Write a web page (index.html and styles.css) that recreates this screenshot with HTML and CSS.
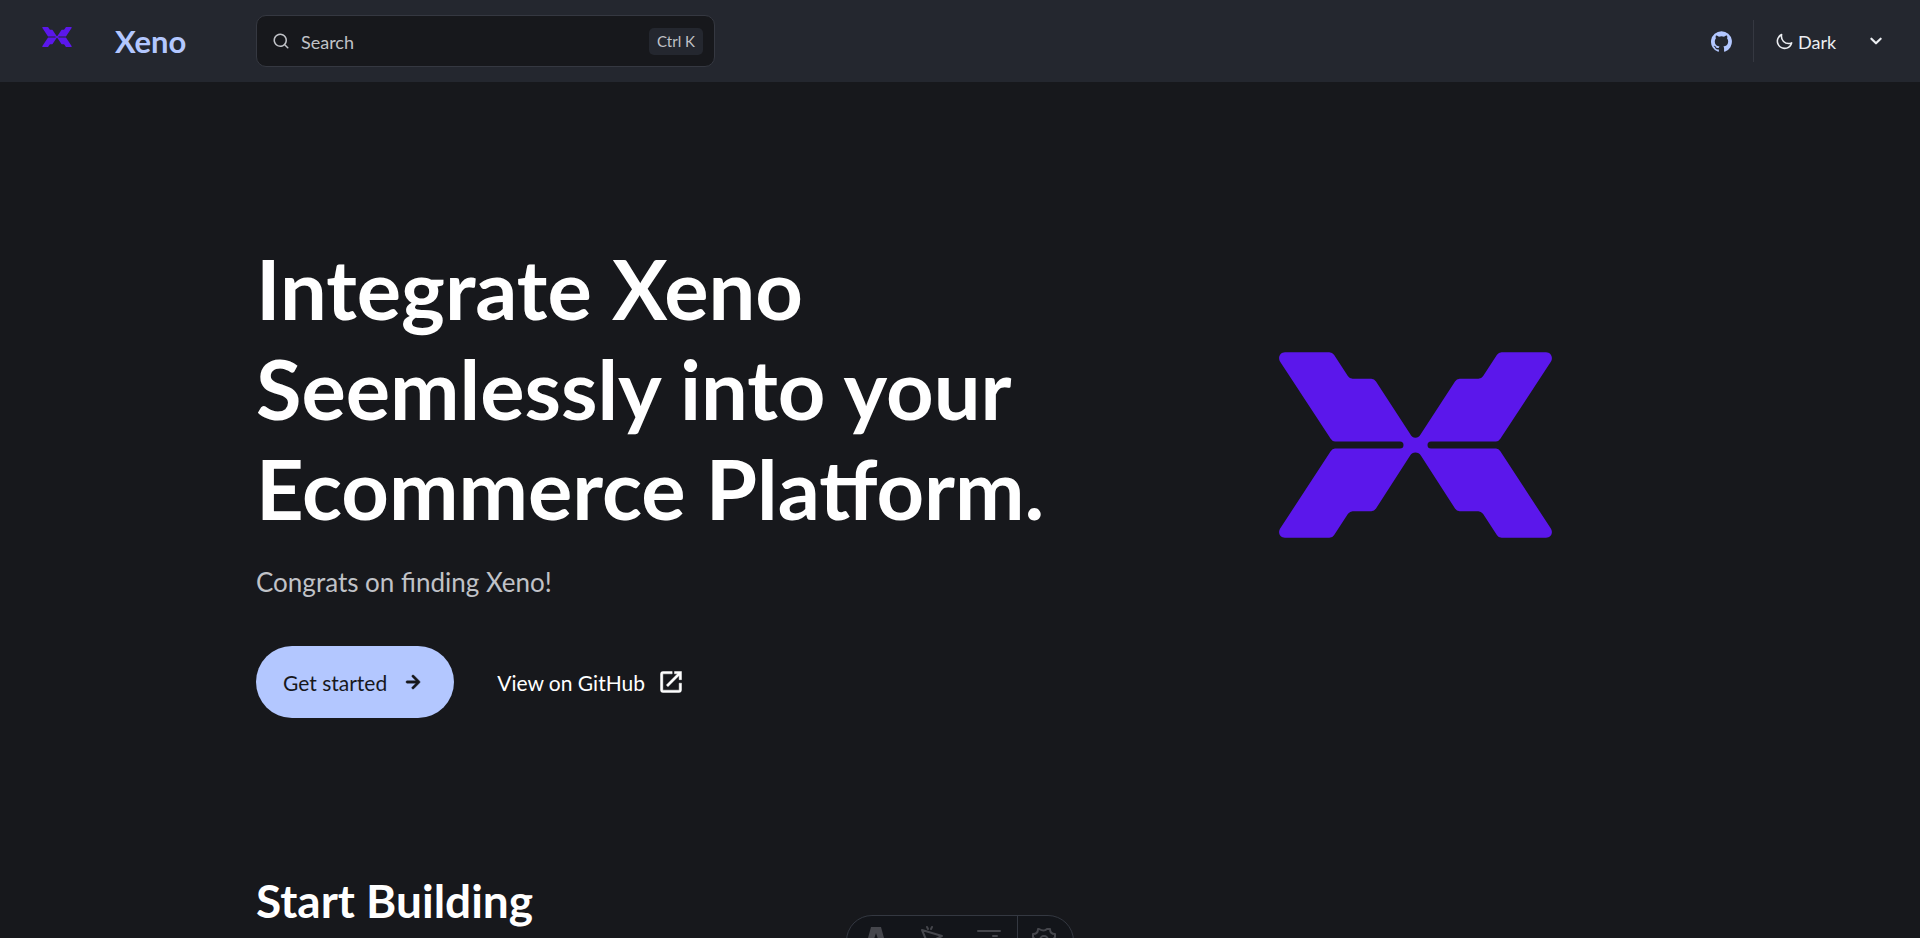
FILE: index.html
```html
<!DOCTYPE html>
<html lang="en">
  <head>
    <meta charset="UTF-8" />
    <meta name="viewport" content="width=device-width, initial-scale=1.0" />
    <title>Xeno</title>
    <link rel="stylesheet" href="styles.css">
  </head>
  <body>
    <!-- Shared logo shape -->
    <svg class="sprite" aria-hidden="true">
      <symbol id="xeno-logo" viewBox="57 67 819 557">
        <path d="M75 67H208Q217 67 222 75L264 139Q270 147 278 147H334Q343 147 348 155L450 312Q456 324 466 324Q477 324 483 312L585 155Q590 147 599 147H655Q663 147 669 139L711 75Q716 67 725 67H858C873 67 880 83 873 95L721 327Q716 335 708 335H513A10.5 10.5 0 0 0 513 356H708Q716 356 721 364L873 597C880 609 873 624 858 624H725Q716 624 711 616L669 552Q663 544 655 544H599Q590 544 585 536L483 378Q477 368 466 368Q456 368 450 378L348 536Q343 544 334 544H278Q270 544 264 552L222 616Q217 624 208 624H75C60 624 53 609 60 597L212 364Q217 356 225 356H420A10.5 10.5 0 0 0 420 335H225Q217 335 212 327L60 95C53 83 60 67 75 67Z" />
      </symbol>
    </svg>

    <header class="header">
      <a class="site-title" href="/">
        <svg class="site-logo"><use href="#xeno-logo" /></svg>
        <span>Xeno</span>
      </a>
      <button class="search" type="button">
        <svg class="search-icon" viewBox="0 0 24 24">
          <path d="M21.71 20.29 18 16.61A9 9 0 1 0 16.61 18l3.68 3.68a.999.999 0 0 0 1.42 0 1 1 0 0 0 0-1.39ZM11 18a7 7 0 1 1 0-14 7 7 0 0 1 0 14Z" />
        </svg>
        <span>Search</span>
        <kbd>Ctrl K</kbd>
      </button>
      <div class="header-right">
        <a class="social" href="#github" aria-label="GitHub">
          <svg viewBox="0 0 24 24">
            <path d="M12 .3a12 12 0 0 0-3.8 23.38c.6.12.83-.26.83-.57L9 21.07c-3.34.72-4.04-1.61-4.04-1.61-.55-1.39-1.34-1.76-1.34-1.76-1.08-.74.09-.73.09-.73 1.2.09 1.83 1.24 1.83 1.24 1.08 1.83 2.81 1.3 3.5 1 .1-.78.42-1.31.76-1.61-2.67-.3-5.47-1.33-5.47-5.93 0-1.31.47-2.38 1.24-3.22-.14-.3-.54-1.52.1-3.18 0 0 1-.32 3.3 1.23a11.5 11.5 0 0 1 6 0c2.28-1.55 3.29-1.23 3.29-1.23.64 1.66.24 2.88.12 3.18a4.65 4.65 0 0 1 1.23 3.22c0 4.61-2.8 5.63-5.48 5.92.42.36.81 1.1.81 2.22l-.01 3.29c0 .31.2.69.82.57A12 12 0 0 0 12 .3Z" />
          </svg>
        </a>
        <div class="theme">
          <svg class="theme-icon" viewBox="0 0 24 24">
            <path d="M21.64 13a1 1 0 0 0-1.05-.14 8.049 8.049 0 0 1-3.37.73 8.15 8.15 0 0 1-8.14-8.1 8.59 8.59 0 0 1 .25-2A1 1 0 0 0 8 2.36a10.14 10.14 0 1 0 14 11.69 1 1 0 0 0-.36-1.05Zm-9.5 6.69A8.14 8.14 0 0 1 7.08 5.22v.27a10.15 10.15 0 0 0 10.14 10.14 9.784 9.784 0 0 0 2.1-.22 8.11 8.11 0 0 1-7.18 4.32v-.04Z" />
          </svg>
          <select aria-label="Select theme">
            <option>Dark</option>
            <option>Light</option>
            <option>Auto</option>
          </select>
          <svg class="caret" viewBox="0 0 24 24">
            <path d="M17 9.17a1 1 0 0 0-1.41 0L12 12.71 8.46 9.17a1 1 0 1 0-1.41 1.42l4.24 4.24a1.002 1.002 0 0 0 1.42 0L17 10.59a1.002 1.002 0 0 0 0-1.42Z" />
          </svg>
        </div>
      </div>
    </header>

    <main class="content">
      <section class="hero">
        <div class="hero-text">
          <h1>Integrate Xeno Seemlessly into your Ecommerce Platform.</h1>
          <p>Congrats on finding Xeno!</p>
          <div class="actions">
            <a class="action primary" href="#start">
              Get started
              <svg viewBox="0 0 24 24">
                <path d="M17.92 11.62a1.001 1.001 0 0 0-.21-.33l-5-5a1.003 1.003 0 1 0-1.42 1.42l3.3 3.29H7a1 1 0 0 0 0 2h7.59l-3.3 3.29a1.002 1.002 0 0 0 .325 1.639 1 1 0 0 0 1.095-.219l5-5a1 1 0 0 0 .21-.33 1 1 0 0 0 0-.76Z" />
              </svg>
            </a>
            <a class="action" href="#github">
              View on GitHub
              <svg viewBox="0 0 24 24">
                <path d="M13 3H5a2 2 0 0 0-2 2v14a2 2 0 0 0 2 2h14a2 2 0 0 0 2-2v-6h-2v6H5V5h8ZM15 3v2h2.600L8 14.600 9.400 16 19 6.400V10h2V3Z" />
              </svg>
            </a>
          </div>
        </div>
        <svg class="hero-logo" role="img" aria-label="Xeno logo"><use href="#xeno-logo" /></svg>
      </section>
      <h2 id="start">Start Building</h2>
    </main>

    <!-- Dev toolbar, peeking in from the bottom edge -->
    <div class="toolbar">
      <button type="button" aria-label="Menu">
        <svg viewBox="0 0 28 28"><path fill-rule="evenodd" d="M10 2h10l6 22-7-3h-8l-7 3ZM15 8l-3 9h6Z" /></svg>
      </button>
      <button type="button" aria-label="Inspect">
        <svg viewBox="0 0 28 28" class="line"><path d="m4 5 20 6-8 4-4 9ZM9 2l1 2M14 2l-1 2" /></svg>
      </button>
      <button type="button" aria-label="Audit">
        <svg viewBox="0 0 28 28" class="line"><path d="M3 6h22M3 14h11M3 22h8M18 11h4" /></svg>
      </button>
      <button class="settings" type="button" aria-label="Settings">
        <svg viewBox="0 0 28 28" class="line">
          <path d="M9 4Q14 7 17 4L20 4Q20 9 25 9L25 12Q22 15 25 18L25 21Q20 21 20 26L17 26Q14 23 9 26L8 26Q8 21 3 21L3 18Q6 15 3 12L3 9Q8 9 8 4Z" />
          <circle cx="14" cy="15" r="4" />
        </svg>
      </button>
    </div>
  </body>
</html>
```
FILE: styles.css
```css
* {
  margin: 0;
  padding: 0;
  box-sizing: border-box;
}

body {
  height: 100vh;
  overflow: hidden;
  background-color: #17181c;
  color: #fff;
  font-family: Lato, "Open Sans", sans-serif;
  font-size: 20px;
}

button,
select {
  font: inherit;
  color: inherit;
  border: none;
  background: none;
  cursor: pointer;
}

a {
  color: inherit;
  text-decoration: none;
}

svg {
  fill: currentColor;
}

.sprite {
  display: none;
}

.header {
  display: grid;
  grid-template-columns: 216px 1fr auto;
  align-items: center;
  height: 82px;
  padding: 0 32px 0 40px;
  background-color: #24272f;
}

.site-title {
  display: flex;
  align-items: center;
  gap: 41px;
  color: #b3c7ff;
  font-size: 31px;
  font-weight: 700;
}

.site-logo {
  width: 34px;
  height: 20px;
  margin-bottom: 8px;
  color: #5b17eb;
}

.search {
  display: flex;
  align-items: center;
  gap: 11px;
  width: 459px;
  height: 52px;
  padding: 0 11px 0 15px;
  border: 1px solid #353841;
  border-radius: 10px;
  background-color: #17181c;
  color: #c0c2c7;
  font-size: 18px;
}

.search span {
  padding-top: 2px;
}

.search-icon {
  width: 18px;
  height: 18px;
}

.search kbd {
  margin-left: auto;
  padding: 3px 8px;
  border-radius: 5px;
  background-color: #24272f;
  font-family: inherit;
  font-size: 15px;
  line-height: 21px;
}

.header-right {
  display: flex;
  align-items: center;
}

.social {
  display: flex;
  padding-right: 21px;
  margin-right: 21px;
  border-right: 1px solid #353841;
  height: 42px;
  align-items: center;
  color: #b3c7ff;
}

.social svg {
  width: 21px;
  height: 21px;
}

.theme {
  display: flex;
  align-items: center;
  color: #eceef2;
  font-size: 18px;
}

.theme-icon {
  width: 19px;
  height: 19px;
}

.theme select {
  width: 70px;
  padding: 2px 0 0 4px;
  appearance: none;
}

.caret {
  width: 26px;
  height: 26px;
  margin-right: -1px;
  margin-left: -1px;
}

.content {
  padding: 0 256px;
}

.hero {
  display: grid;
  grid-template-columns: 7fr 4fr;
  gap: 42px;
  align-items: center;
  padding: 156px 0 155px;
}

h1 {
  font-size: 83px;
  font-weight: 700;
  line-height: 100px;
}

.hero p {
  margin-top: 26px;
  color: #c0c2c7;
  font-size: 26px;
  line-height: 36px;
}

.actions {
  display: flex;
  align-items: center;
  gap: 16px;
  margin-top: 46px;
}

.action {
  display: flex;
  align-items: center;
  gap: 12px;
  height: 72px;
  padding: 0 27px;
  border-radius: 36px;
  font-size: 21px;
}

.action svg {
  width: 28px;
  height: 28px;
  stroke: currentColor;
  stroke-width: 0.4;
}

.primary {
  background-color: #b3c7ff;
  color: #17181c;
}

.hero-logo {
  justify-self: center;
  width: 273px;
  height: 186px;
  margin-bottom: 66px;
  color: #5b17eb;
}

h2 {
  font-size: 46px;
  font-weight: 700;
  line-height: 56px;
}

.toolbar {
  position: fixed;
  bottom: -29px;
  left: 50%;
  display: flex;
  width: 228px;
  height: 52px;
  transform: translateX(-50%);
  border: 1px solid #343841;
  border-radius: 26px;
  background-color: #13151a;
  color: #45464c;
  overflow: hidden;
}

.toolbar button {
  flex: 1;
}

.toolbar svg {
  width: 28px;
  height: 28px;
}

.toolbar .line {
  fill: none;
  stroke: currentColor;
  stroke-width: 2;
  stroke-linecap: round;
  stroke-linejoin: round;
}

.toolbar .settings {
  flex: 0 0 56px;
  padding-right: 4px;
  border-left: 1px solid #343841;
}
```
